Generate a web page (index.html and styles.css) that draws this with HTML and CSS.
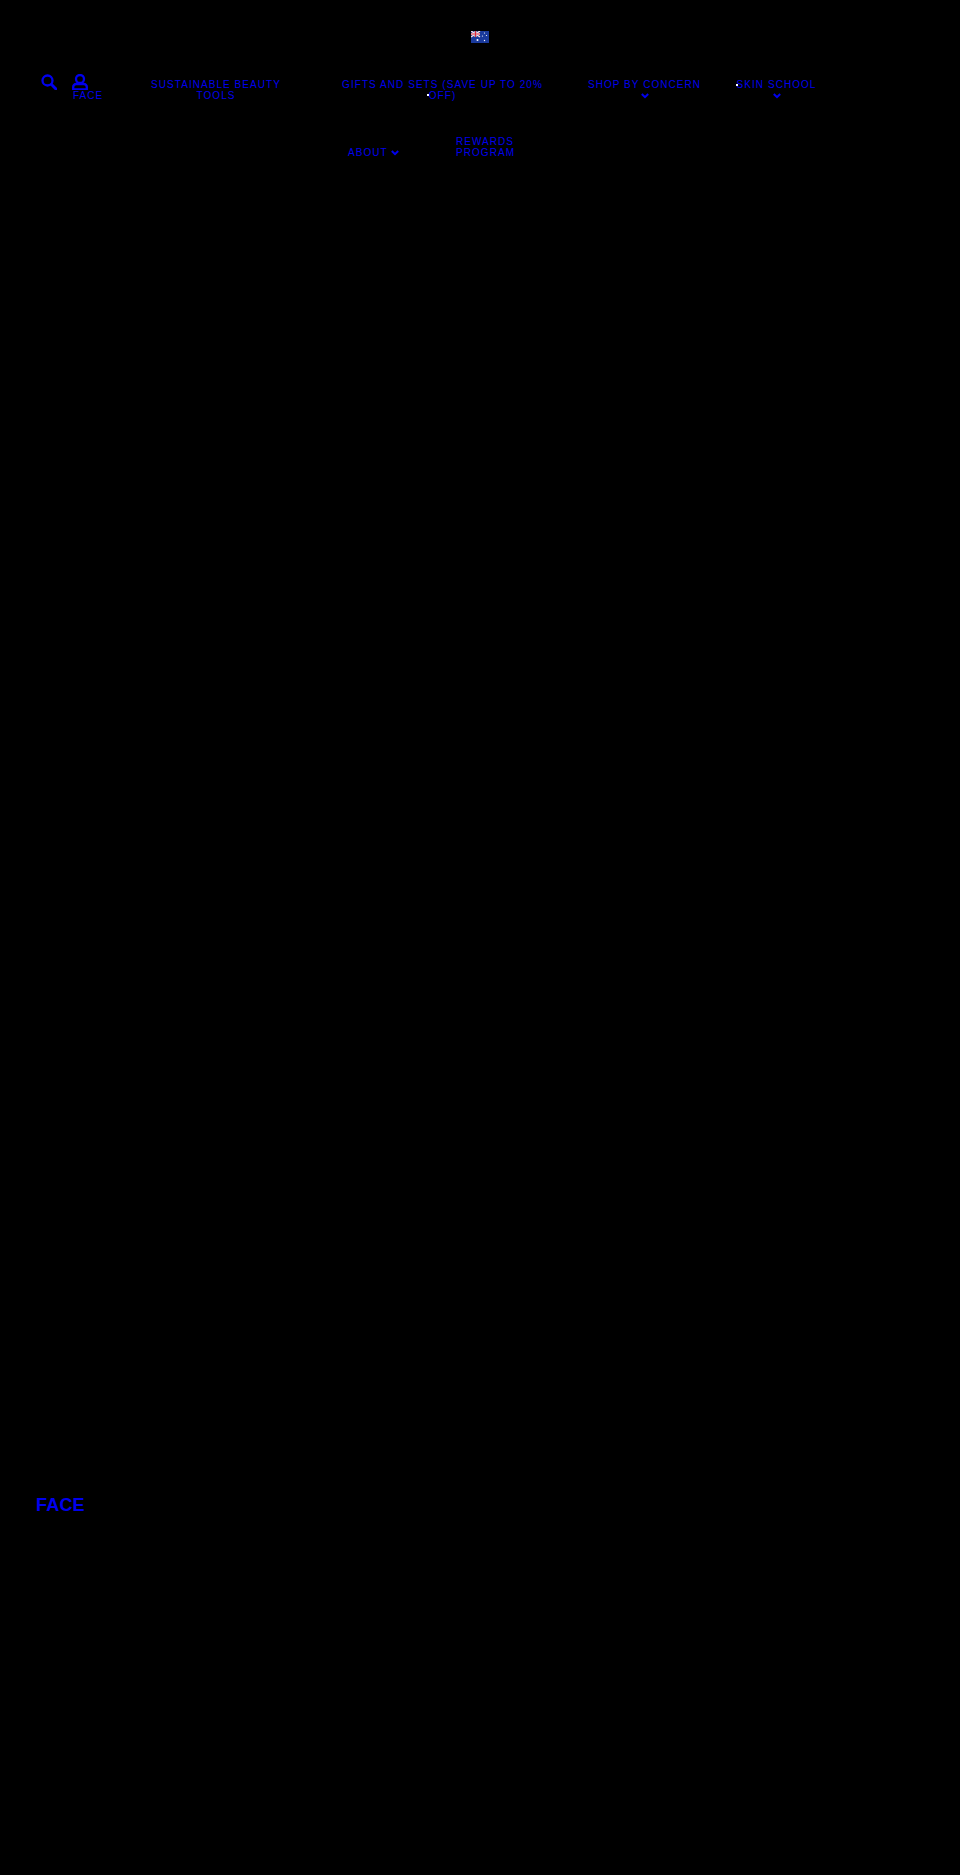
FILE: index.html
```html
<!DOCTYPE html>
<html lang="en">
<head>
<meta charset="utf-8">
<title>Face</title>
<link rel="stylesheet" href="styles.css">
</head>
<body>
<header class="topbar">
  <a class="flag" href="#" aria-label="Australia">
    <svg viewBox="0 0 18 12" width="18" height="12">
      <rect width="18" height="12" fill="#1a3a9c"/>
      <rect width="9" height="6" fill="#2a3a90"/>
      <path d="M0 0L9 6M9 0L0 6" stroke="#f4e6ea" stroke-width="1.4"/>
      <path d="M4.500 0V6M0 3H9" stroke="#f4e6ea" stroke-width="2"/>
      <path d="M4.500 0V6M0 3H9" stroke="#d8283c" stroke-width="1"/>
      <circle cx="6.500" cy="9" r="1" fill="#fff"/>
      <circle cx="13.500" cy="2" r=".6" fill="#fff"/>
      <circle cx="11.500" cy="5" r=".6" fill="#fff"/>
      <circle cx="15.500" cy="4.500" r=".6" fill="#fff"/>
      <circle cx="13.500" cy="9.500" r=".7" fill="#fff"/>
    </svg>
  </a>
</header>
<nav class="nav">
  <div class="nav-main">
    <div class="tools">
      <div class="tool-icons">
        <a href="#" class="icon-link" aria-label="Search">
          <svg viewBox="0 0 16 16" width="16" height="16"><circle cx="6.500" cy="6.500" r="5" class="stroke wide"/><path d="M10.500 10.500L15 15" class="stroke thick"/></svg>
        </a>
        <a href="#" class="icon-link" aria-label="Account">
          <svg viewBox="0 0 16 16" width="16" height="16"><circle cx="8" cy="5" r="4" class="stroke wide"/><path d="M1.200 15.500V13A3 3 0 0 1 4.200 10H11.800A3 3 0 0 1 14.800 13V15.500Z" class="stroke wide"/></svg>
        </a>
      </div>
      <a href="#" class="link face-link">FACE</a>
    </div>
    <a href="#" class="link item item-tools">SUSTAINABLE BEAUTY TOOLS</a>
    <a href="#" class="link item item-gifts"><span class="dot dot-gifts"></span>GIFTS AND SETS (SAVE UP TO 20% OFF)</a>
    <a href="#" class="link item item-shop">SHOP BY CONCERN
      <svg class="chevron" viewBox="0 0 8 6" width="8" height="6"><path d="M.8 1L4 4.200L7.200 1" class="stroke"/></svg>
    </a>
    <a href="#" class="link item item-skin"><span class="dot dot-skin"></span>SKIN SCHOOL
      <svg class="chevron" viewBox="0 0 8 6" width="8" height="6"><path d="M.8 1L4 4.200L7.200 1" class="stroke"/></svg>
    </a>
  </div>
  <div class="nav-second">
    <a href="#" class="link about">ABOUT <svg class="chevron-inline" viewBox="0 0 8 6" width="8" height="6"><path d="M.8 1L4 4.200L7.200 1" class="stroke"/></svg></a>
    <a href="#" class="link rewards">REWARDS PROGRAM</a>
  </div>
</nav>
<main class="content">
  <h1 class="title">FACE</h1>
</main>
</body>
</html>
```

FILE: styles.css
```css
* { box-sizing: border-box; }
html, body { margin: 0; padding: 0; background: #000; }
body {
  height: 1875px;
  overflow: hidden;
  font-family: "Liberation Sans", Arial, sans-serif;
  color: #0000ee;
}
a { color: #0000ee; text-decoration: none; }
.topbar {
  display: flex;
  justify-content: center;
  padding-top: 31px;
  height: 74px;
}
.flag { display: block; height: 12px; }
.flag svg { display: block; }
.nav { display: flex; flex-direction: column; }
.nav-main {
  display: grid;
  grid-template-columns: 109px 190px 247px 149px auto;
  padding-left: 41px;
  height: 62px;
  align-items: start;
}
.link {
  font-size: 10px;
  line-height: 10.500px;
  letter-spacing: 1.050px;
}
.tools { display: flex; flex-direction: column; }
.tool-icons { display: flex; gap: 15px; height: 16px; }
.icon-link { display: block; width: 16px; height: 16px; }
.icon-link svg, .chevron, .chevron-inline { display: block; }
.stroke { fill: none; stroke: #0000ee; stroke-width: 2; }
.wide { stroke-width: 2.300; }
.thick { stroke-width: 3; stroke-linecap: round; }
.face-link { display: block; margin: 1px 0 0 32px; }
.item { position: relative; display: block; text-align: center; margin-top: 6px; }
.item-tools { width: 132px; }
.item-gifts { width: 205px; }
.item-shop { width: 115px; }
.item-skin { width: 81px; }
.chevron { margin: 2px auto 0; }
.dot {
  position: absolute;
  width: 2px;
  height: 2px;
  background: #fff;
}
.dot-gifts { left: 87px; top: 14px; }
.dot-skin { left: 0; top: 4px; }
.nav-second {
  display: flex;
  align-items: flex-end;
  padding-left: 348px;
  padding-top: 1px;
}
.about { display: flex; align-items: center; gap: 3px; width: 108px; }
.chevron-inline { margin-top: 1px; }
.rewards { display: block; width: 62px; }
.content { padding: 1337px 0 0 36px; }
.title {
  margin: 0;
  font-size: 18px;
  line-height: 21px;
  font-weight: 700;
  letter-spacing: .2px;
}
```
